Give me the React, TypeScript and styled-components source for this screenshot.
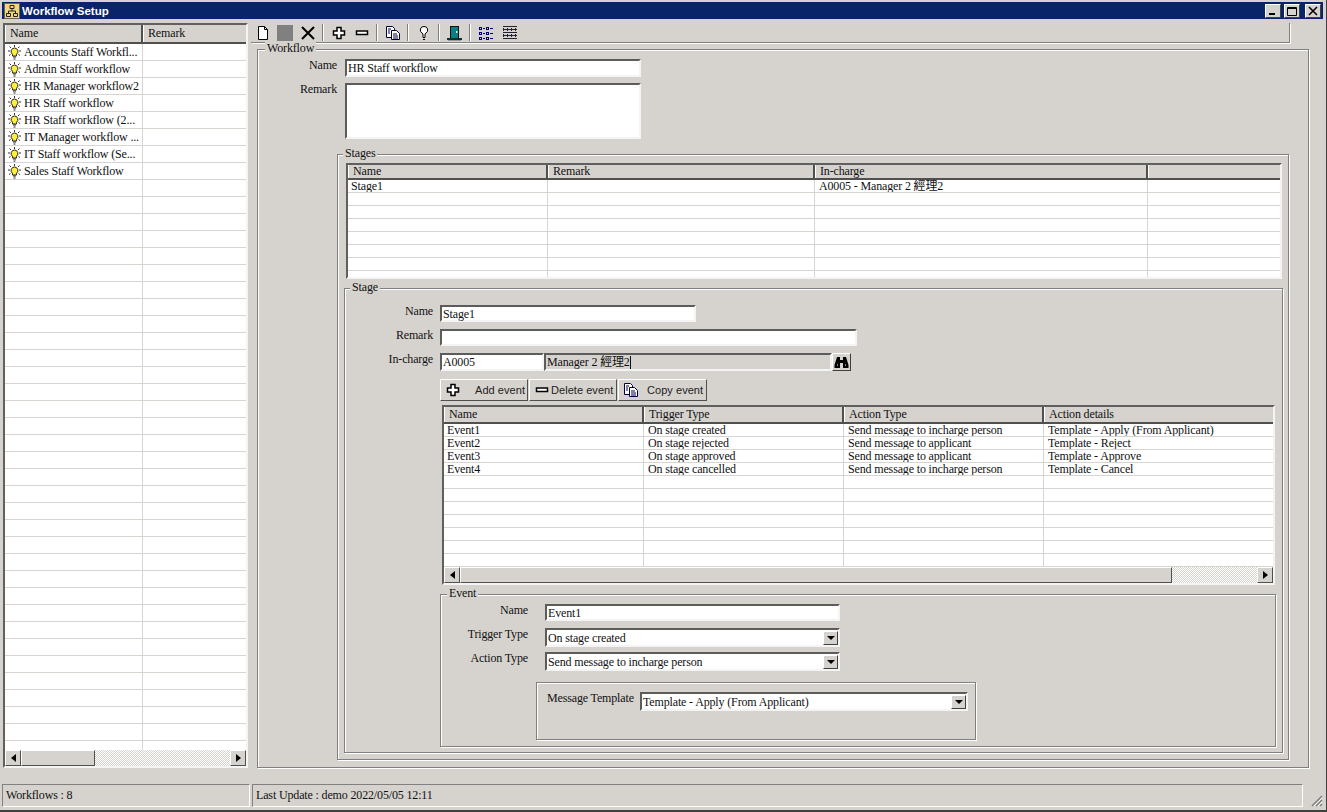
import React from "react";
import styled, { createGlobalStyle } from "styled-components";

const serif = `"Liberation Serif", "Noto Sans CJK TC", serif`;
const sans = `"Liberation Sans", Arial, sans-serif`;
const face = "#d6d3ce";

const Global = createGlobalStyle`
  html, body { margin: 0; padding: 0; background: ${face}; overflow: hidden; }
  * { box-sizing: border-box; }
`;

const Win = styled.div`
  width: 1327px; height: 812px; padding: 2px 2px 0 2px; background: ${face};
  border-right: 1px solid #404040; border-bottom: 2px solid #404040;
  font: 12px/13px ${serif}; letter-spacing: -.15px; color: #111; overflow: hidden;
`;
const TitleBar = styled.div`
  height: 17px; margin-right: 1px; background: #0a246a; display: flex; align-items: center; padding: 0 2px 0 2px; gap: 2px;
`;
const TitleText = styled.span`
  flex: 1; color: #fff; font: bold 11.5px ${sans}; letter-spacing: 0;
`;
const WinBtn = styled.div`
  width: 16px; height: 14px; background: ${face}; margin-left: 1px; display: flex; align-items: center; justify-content: center;
  border: 1px solid; border-color: #fff #404040 #404040 #fff;
`;
const Main = styled.div`display: flex; margin-top: 4px; height: 745px; padding-left: 1px;`;
const Left = styled.div`width: 245px; height: 745px; flex: none;`;
const Right = styled.div`margin-left: 3px; flex: 1;`;

const Frame = styled.div<{ $w?: number; $h: number; $ml?: number; $mt?: number }>`
  position: relative; width: ${p => p.$w ? p.$w + "px" : "100%"}; height: ${p => p.$h}px;
  margin-left: ${p => p.$ml || 0}px; margin-top: ${p => p.$mt || 0}px;
  background: #fff; border: 2px solid; border-color: #606060 #f4f4f4 #f4f4f4 #606060;
  display: flex; flex-direction: column; overflow: hidden;
`;
const Row = styled.div<{ $cols: string; $h: number }>`
  display: grid; grid-template-columns: ${p => p.$cols}; height: ${p => p.$h}px; flex: none;
`;
const Head = styled.div`
  background: ${face}; padding-left: 5px; border-right: 2px solid #505050; border-bottom: 2px solid #505050; white-space: nowrap; overflow: hidden;
  display: flex; align-items: center; box-shadow: inset 1px 0 0 #fff;
  &:last-child { border-right: 0; }
`;
const Cell = styled.div`
  padding-left: 4px; border-right: 1px solid #d8d5d0; border-bottom: 1px solid #d8d5d0; white-space: nowrap; overflow: hidden; display: flex; align-items: center; gap: 2px;
  &:first-child { padding-left: 3px; }
  &:last-child { border-right: 0; }
`;
const Rows = styled.div`flex: 1; overflow: hidden; min-height: 0;`;
const Scroll = styled.div`
  height: 16px; flex: none; display: flex; background: repeating-conic-gradient(#fff 0 25%, ${face} 0 50%) 0 0 / 2px 2px;
`;
const ScrollBtn = styled.div`
  width: 16px; height: 16px; flex: none; background: ${face}; display: flex; align-items: center; justify-content: center;
  border: 1px solid; border-color: #fff #505050 #505050 #fff;
`;
const Thumb = styled.div<{ $w: number }>`
  width: ${p => p.$w}px; height: 16px; background: ${face}; border: 1px solid; border-color: #fff #505050 #505050 #fff;
`;
const Track = styled.div`flex: 1;`;
const ArrowL = styled.i`width: 0; height: 0; border: 4px solid transparent; border-left-width: 0; border-right: 5px solid #000;`;
const ArrowR = styled.i`width: 0; height: 0; border: 4px solid transparent; border-right-width: 0; border-left: 5px solid #000;`;

const Toolbar = styled.div`
  width: 1039px; height: 20px; display: flex; align-items: center; padding-left: 1px;
  border-right: 1px solid #808080; border-bottom: 1px solid #808080; box-shadow: 1px 1px 0 #fff;
`;
const Tool = styled.div<{ $w?: number }>`
  width: ${p => p.$w || 23}px; height: 19px; display: flex; align-items: center; justify-content: center; flex: none;
`;
const Sep = styled.div`width: 2px; height: 17px; margin: 0 3px; border-left: 1px solid #808080; border-right: 1px solid #fff; flex: none;`;
const Gray = styled.div`width: 16px; height: 16px; background: #808080;`;

const Group = styled.div<{ $w: number; $h: number; $ml?: number; $mt?: number; $pt?: number }>`
  position: relative; width: ${p => p.$w}px; height: ${p => p.$h}px;
  margin-left: ${p => p.$ml || 0}px; margin-top: ${p => p.$mt || 0}px; padding-top: ${p => p.$pt || 0}px;
  border: 1px solid #808080; box-shadow: 1px 1px 0 #fff, inset 1px 1px 0 #fff;
`;
const Legend = styled.span<{ $left: number }>`
  position: absolute; top: -9px; left: ${p => p.$left}px; padding: 0 2px; background: ${face}; line-height: 14px;
`;
const FieldRow = styled.div<{ $mt?: number; $lw: number; $gap: number }>`
  display: grid; grid-template-columns: ${p => p.$lw}px auto; column-gap: ${p => p.$gap}px; justify-content: start; margin-top: ${p => p.$mt || 0}px;
`;
const Label = styled.div`text-align: right; white-space: nowrap;`;
const Input = styled.div<{ $w: number; $h: number; $bg?: string }>`
  width: ${p => p.$w}px; height: ${p => p.$h}px; background: ${p => p.$bg || "#fff"};
  border: 2px solid; border-color: #5c5c5c #f4f4f4 #f4f4f4 #5c5c5c; padding: 1px 0 0 1px; white-space: nowrap; display: flex;
`;
const Caret = styled.span`border-right: 1px solid #111;`;
const Combo = styled(Input)`justify-content: space-between; align-items: flex-start; padding: 2px 0 0 1px;`;
const Drop = styled.div`
  width: 15px; height: 14px; margin-top: -1px; background: ${face}; border: 1px solid; border-color: #fff #404040 #404040 #fff; display: flex; align-items: center; justify-content: center;
`;
const DropArrow = styled.i`width: 0; height: 0; border: 4px solid transparent; border-bottom-width: 0; border-top: 4px solid #000;`;
const Inline = styled.div`display: flex;`;
const BinoBtn = styled.div`
  width: 19px; height: 18px; background: ${face}; border: 1px solid; border-color: #fff #404040 #404040 #fff; display: flex; align-items: center; justify-content: center;
`;
const BtnBar = styled.div`display: flex; gap: 1px; margin: 8px 0 0 95px;`;
const Btn = styled.div<{ $w: number; $lead: number }>`
  width: ${p => p.$w}px; height: 22px; background: ${face}; border: 1px solid; border-color: #fff #505050 #505050 #fff;
  display: flex; align-items: center; font: 11px ${sans}; letter-spacing: .05px; padding-left: 4px; white-space: nowrap; color: #222;
  svg { flex: none; margin-right: ${p => p.$lead}px; }
`;
const MsgRow = styled.div`display: flex; padding-left: 10px;`;
const MsgLabel = styled.div`width: 93px; white-space: nowrap;`;

const Status = styled.div`display: flex; margin-top: 16px; height: 23px; align-items: stretch;`;
const Pane = styled.div<{ $w: number; $ml?: number }>`
  width: ${p => p.$w}px; margin-left: ${p => p.$ml || 0}px; padding: 4px 0 0 3px; white-space: nowrap;
  border: 1px solid; border-color: #808080 #fff #fff #808080;
`;
const Grip = styled.div`flex: 1; display: flex; align-items: flex-end; justify-content: flex-end; padding-right: 1px;`;
const ListBulb = styled.svg`flex: none; margin-left: -1px;`;

const Icon = { width: 16, height: 16, viewBox: "0 0 16 16" };

const Bulb = () => (
  <ListBulb width="15" height="15" viewBox="0 0 15 15">
    <path d="M7.500 3a3.500 3.500 0 0 0-2 6.300V11h4V9.300A3.500 3.500 0 0 0 7.500 3z" fill="#ffef3a" stroke="#222" />
    <path d="M6 12h3M6.500 14h2" stroke="#222" />
    <path d="M7.500 0v2M1 6h2M12 6h2M2.500 1.500l1.500 1.500M12.500 1.500L11 3M2 10.500l1.500-1M13 10.500l-1.500-1" stroke="#333" />
  </ListBulb>
);
const Plus = () => (
  <svg {...Icon}><path d="M6 2.500h4V6h3.500v4H10v3.500H6V10H2.500V6H6z" fill="#fff" stroke="#000" strokeWidth="1.500" /></svg>
);
const Minus = () => (
  <svg {...Icon}><rect x="2.500" y="6" width="11" height="3.500" fill="#fff" stroke="#000" strokeWidth="1.500" /></svg>
);
const Copy = () => (
  <svg {...Icon}>
    <path d="M1.500 1.500h6l2 2v9h-8z" fill="#fff" stroke="#000040" />
    <path d="M6.500 5.500h5l3 3v6h-8z" fill="#fff" stroke="#000040" />
    <path d="M3 4h3M3 6h2M3 8h2M8 9h4M8 11h5M8 13h5" stroke="#000040" />
  </svg>
);

const leftNames = ["Accounts Staff Workfl...", "Admin Staff workflow", "HR Manager workflow2", "HR Staff workflow", "HR Staff workflow (2...", "IT Manager workflow ...", "IT Staff workflow (Se...", "Sales Staff Workflow"];
const events = [
  ["Event1", "On stage created", "Send message to incharge person", "Template - Apply (From Applicant)"],
  ["Event2", "On stage rejected", "Send message to applicant", "Template - Reject"],
  ["Event3", "On stage approved", "Send message to applicant", "Template - Approve"],
  ["Event4", "On stage cancelled", "Send message to incharge person", "Template - Cancel"],
];

function Hscroll({ thumb }: { thumb: number }) {
  return (
    <Scroll>
      <ScrollBtn><ArrowL /></ScrollBtn>
      <Thumb $w={thumb} />
      <Track />
      <ScrollBtn><ArrowR /></ScrollBtn>
    </Scroll>
  );
}

export default function App() {
  const leftCols = "138px 1fr";
  const stageCols = "200px 267px 333px 1fr";
  const eventCols = "200px 200px 200px 1fr";
  return (
    <Win>
      <Global />
      <TitleBar>
        <svg width="16" height="16" viewBox="0 0 16 16">
          <rect x=".5" y=".5" width="15" height="15" fill="#f0d878" stroke="#665" />
          <path d="M6 2.500h4v3H6zM2.500 10.500h4v3h-4zM9.500 10.500h4v3h-4zM8 5.500v2.500M4.500 10.500V8h7v2.500" fill="none" stroke="#222" />
        </svg>
        <TitleText>Workflow Setup</TitleText>
        <WinBtn><svg width="10" height="10"><rect x="1" y="7" width="6" height="2" fill="#000" /></svg></WinBtn>
        <WinBtn><svg width="10" height="10"><path d="M.5 1.500h9v8h-9zM.5 2.500h9" fill="none" stroke="#000" /></svg></WinBtn>
        <WinBtn style={{ marginLeft: 3 }}><svg width="10" height="10"><path d="M1 1l8 8M9 1l-8 8" stroke="#000" strokeWidth="1.600" /></svg></WinBtn>
      </TitleBar>
      <Main>
        <Left>
          <Frame $h={745}>
            <Row $cols={leftCols} $h={19}><Head>Name</Head><Head>Remark</Head></Row>
            <Rows>
              {Array.from({ length: 42 }, (_, i) => (
                <Row key={i} $cols={leftCols} $h={17}>
                  <Cell>{leftNames[i] && <><Bulb />{leftNames[i]}</>}</Cell>
                  <Cell />
                </Row>
              ))}
            </Rows>
            <Hscroll thumb={74} />
          </Frame>
        </Left>
        <Right>
          <Toolbar>
            <Tool $w={21}><svg {...Icon}><path d="M3.500 1.500h6l3 3v10h-9z" fill="#fff" stroke="#000" /><path d="M9.500 1.500v3h3" fill="none" stroke="#000" /></svg></Tool>
            <Tool $w={23}><Gray /></Tool>
            <Tool $w={23}><svg {...Icon}><path d="M2 2l12 12M14 2L2 14" stroke="#000" strokeWidth="2" /></svg></Tool>
            <Sep />
            <Tool $w={23}><Plus /></Tool>
            <Tool $w={23}><Minus /></Tool>
            <Sep />
            <Tool $w={23}><Copy /></Tool>
            <Sep />
            <Tool $w={23}><svg {...Icon}><path d="M8 1.500a3.500 3.500 0 0 0-2 6.500l1 1v3.500h2V9l1-1a3.500 3.500 0 0 0-2-6.500z" fill="#fff" stroke="#000" /><path d="M7 14.500h2" stroke="#000" /></svg></Tool>
            <Sep />
            <Tool $w={23}><svg width="18" height="18" viewBox="0 0 18 18"><rect x="4.500" y="2.500" width="8" height="12" fill="#0a7f7f" stroke="#111" /><rect x="10" y="7" width="1.500" height="2" fill="#cfe" /><rect x="1" y="14" width="15" height="2" fill="#0d3030" /><rect x="2" y="16" width="13" height="1" fill="#999" /></svg></Tool>
            <Sep />
            <Tool $w={23}><svg {...Icon}><g fill="none" stroke="#000080"><rect x="1.500" y="2.500" width="2" height="2" /><rect x="1.500" y="7.500" width="2" height="2" /><rect x="1.500" y="12.500" width="2" height="2" /><rect x="8.500" y="2.500" width="2" height="2" /><rect x="8.500" y="7.500" width="2" height="2" /><rect x="8.500" y="12.500" width="2" height="2" /><path d="M5 3.500h2M5 8.500h2M5 13.500h2M12 3.500h3M12 8.500h3M12 13.500h3" /></g></svg></Tool>
            <Tool $w={25}><svg {...Icon}><path d="M1 1.500h14M1 4.500h14M1 7.500h14M1 10.500h14M1 13.500h14" stroke="#223" /><path d="M1.500 1v13M5.500 1v13M9.500 1v13M13.500 1v13" stroke="#223" strokeDasharray="1 1" /></svg></Tool>
          </Toolbar>
          <Group $w={1052} $h={719} $ml={6} $mt={6} $pt={9}>
            <Legend $left={7}>Workflow</Legend>
            <FieldRow $lw={79} $gap={8}><Label>Name</Label><Input $w={296} $h={18}>HR Staff workflow</Input></FieldRow>
            <FieldRow $lw={79} $gap={8} $mt={6}><Label>Remark</Label><Input $w={296} $h={56} /></FieldRow>
            <Group $w={952} $h={606} $ml={79} $mt={15} $pt={8}>
              <Legend $left={5}>Stages</Legend>
              <Frame $w={936} $h={116} $ml={8}>
                <Row $cols={stageCols} $h={15}><Head>Name</Head><Head>Remark</Head><Head>In-charge</Head><Head /></Row>
                <Rows>
                  {Array.from({ length: 8 }, (_, i) => (
                    <Row key={i} $cols={stageCols} $h={13}>
                      <Cell>{i === 0 && "Stage1"}</Cell>
                      <Cell />
                      <Cell>{i === 0 && "A0005 - Manager 2 經理2"}</Cell>
                      <Cell />
                    </Row>
                  ))}
                </Rows>
              </Frame>
              <Group $w={939} $h={465} $ml={6} $mt={9} $pt={16}>
                <Legend $left={5}>Stage</Legend>
                <FieldRow $lw={88} $gap={7}><Label>Name</Label><Input $w={256} $h={17}>Stage1</Input></FieldRow>
                <FieldRow $lw={88} $gap={7} $mt={7}><Label>Remark</Label><Input $w={417} $h={17} /></FieldRow>
                <FieldRow $lw={88} $gap={7} $mt={7}>
                  <Label>In-charge</Label>
                  <Inline>
                    <Input $w={104} $h={18}>A0005</Input>
                    <Input $w={288} $h={18} $bg={face}><Caret>Manager 2 經理2</Caret></Input>
                    <BinoBtn>
                      <svg width="15" height="13" viewBox="0 0 15 13"><path d="M3 1h3v3h3V1h3l2.500 8v3H9V7H6v5H.5V9z" fill="#000" /><path d="M3 9h1M11 9h1" stroke="#fff" /></svg>
                    </BinoBtn>
                  </Inline>
                </FieldRow>
                <BtnBar>
                  <Btn $w={88} $lead={14}><Plus />Add event</Btn>
                  <Btn $w={88} $lead={1}><Minus />Delete event</Btn>
                  <Btn $w={89} $lead={8}><Copy />Copy event</Btn>
                </BtnBar>
                <Frame $w={833} $h={180} $ml={97} $mt={4}>
                  <Row $cols={eventCols} $h={17}><Head>Name</Head><Head>Trigger Type</Head><Head>Action Type</Head><Head>Action details</Head></Row>
                  <Rows>
                    {Array.from({ length: 11 }, (_, i) => (
                      <Row key={i} $cols={eventCols} $h={13}>
                        {[0, 1, 2, 3].map(c => <Cell key={c}>{events[i]?.[c]}</Cell>)}
                      </Row>
                    ))}
                  </Rows>
                  <Hscroll thumb={712} />
                </Frame>
                <Group $w={836} $h={153} $ml={95} $mt={9} $pt={9}>
                  <Legend $left={6}>Event</Legend>
                  <FieldRow $lw={87} $gap={17}><Label>Name</Label><Input $w={295} $h={17}>Event1</Input></FieldRow>
                  <FieldRow $lw={87} $gap={17} $mt={7}><Label>Trigger Type</Label><Combo $w={295} $h={19}>On stage created<Drop><DropArrow /></Drop></Combo></FieldRow>
                  <FieldRow $lw={87} $gap={17} $mt={5}><Label>Action Type</Label><Combo $w={295} $h={19}>Send message to incharge person<Drop><DropArrow /></Drop></Combo></FieldRow>
                  <Group $w={440} $h={58} $ml={95} $mt={11} $pt={9}>
                    <MsgRow>
                      <MsgLabel>Message Template</MsgLabel>
                      <Combo $w={328} $h={19}>Template - Apply (From Applicant)<Drop><DropArrow /></Drop></Combo>
                    </MsgRow>
                  </Group>
                </Group>
              </Group>
            </Group>
          </Group>
        </Right>
      </Main>
      <Status>
        <Pane $w={248}>Workflows : 8</Pane>
        <Pane $w={1051} $ml={2}>Last Update : demo 2022/05/05 12:11</Pane>
        <Grip>
          <svg width="14" height="14" viewBox="0 0 14 14"><path d="M13 3L3 13M13 7l-6 6M13 11l-2 2" stroke="#808080" strokeWidth="1.500" /><path d="M13 5l-8 8M13 9l-4 4" stroke="#fff" /></svg>
        </Grip>
      </Status>
    </Win>
  );
}
